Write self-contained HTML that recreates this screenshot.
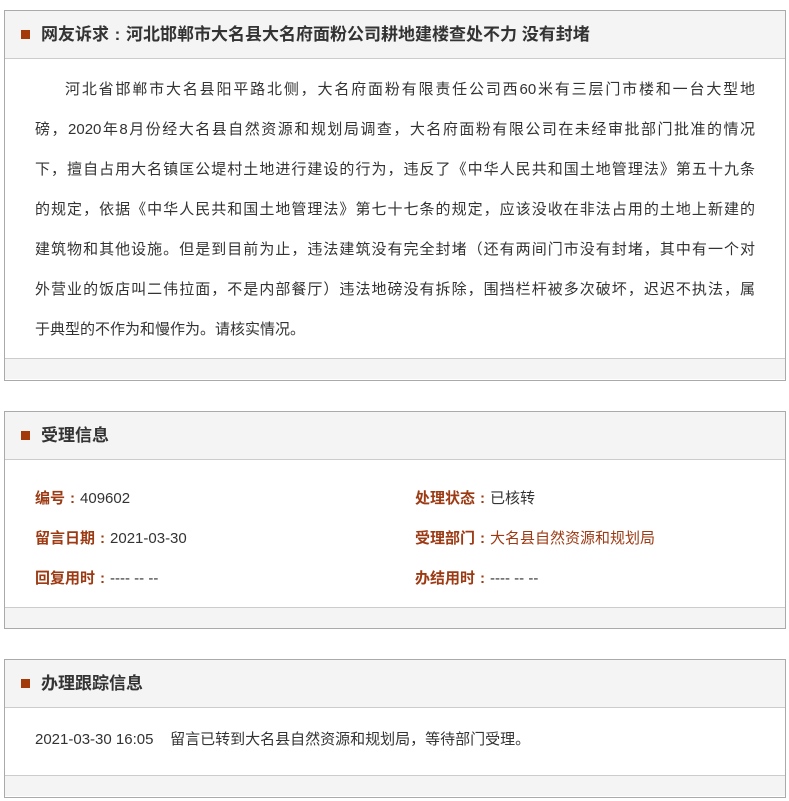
<!DOCTYPE html>
<html><head><meta charset="utf-8"><style>
*{margin:0;padding:0;box-sizing:border-box}
body{width:789px;height:801px;background:#fff;font-family:"Liberation Sans","Microsoft YaHei","Noto Sans CJK SC",sans-serif;color:#333;position:relative;overflow:hidden}
.box{position:absolute;left:4px;width:782px;border:1px solid #aaa;background:#fff}
.hd{height:48px;background:#f4f4f4;border-bottom:1px solid #ccc;position:relative;font-size:17px;font-weight:bold;color:#333;line-height:47px;padding-left:36px}
.hd:before{content:"";position:absolute;left:16px;top:19px;width:9px;height:9px;background:#a33a0a}
.ft{height:21px;background:#f4f4f4;border-top:1px solid #ccc}
.txt{padding:11px 30px 6px 30px;font-size:15px;line-height:40px;overflow:hidden}
.txt div{text-align:justify;text-align-last:justify;white-space:nowrap}
.txt div.l{text-align-last:left}
.row{position:absolute;font-size:15px}
.lb{color:#9c3a13;font-weight:bold}
.br{color:#9c3a13}
.c{display:inline-block;width:1em;text-align:center}
</style></head><body>
<div class="box" style="top:10px;height:371px">
<div class="hd">网友诉求<span class="c">:</span>河北邯郸市大名县大名府面粉公司耕地建楼查处不力 没有封堵</div>
<div class="txt" style="height:299px">
<div style="padding-left:30px">河北省邯郸市大名县阳平路北侧，大名府面粉有限责任公司西60米有三层门市楼和一台大型地</div>
<div>磅，2020年8月份经大名县自然资源和规划局调查，大名府面粉有限公司在未经审批部门批准的情况</div>
<div>下，擅自占用大名镇匡公堤村土地进行建设的行为，违反了《中华人民共和国土地管理法》第五十九条</div>
<div>的规定，依据《中华人民共和国土地管理法》第七十七条的规定，应该没收在非法占用的土地上新建的</div>
<div>建筑物和其他设施。但是到目前为止，违法建筑没有完全封堵（还有两间门市没有封堵，其中有一个对</div>
<div>外营业的饭店叫二伟拉面，不是内部餐厅）违法地磅没有拆除，围挡栏杆被多次破坏，迟迟不执法，属</div>
<div class="l">于典型的不作为和慢作为。请核实情况。</div>
</div>
<div class="ft"></div>
</div>

<div class="box" style="top:411px;height:218px">
<div class="hd">受理信息</div>
<div style="height:147px;position:relative">
<div class="row" style="left:30px;top:27px"><span class="lb">编号<span class="c">:</span></span>409602</div>
<div class="row" style="left:410px;top:27px"><span class="lb">处理状态<span class="c">:</span></span>已核转</div>
<div class="row" style="left:30px;top:67px"><span class="lb">留言日期<span class="c">:</span></span>2021-03-30</div>
<div class="row" style="left:410px;top:67px"><span class="lb">受理部门<span class="c">:</span></span><span class="br">大名县自然资源和规划局</span></div>
<div class="row" style="left:30px;top:107px"><span class="lb">回复用时<span class="c">:</span></span>---- -- --</div>
<div class="row" style="left:410px;top:107px"><span class="lb">办结用时<span class="c">:</span></span>---- -- --</div>
</div>
<div class="ft"></div>
</div>

<div class="box" style="top:659px;height:139px">
<div class="hd">办理跟踪信息</div>
<div style="height:67px;position:relative">
<div class="row" style="left:30px;top:20px">2021-03-30 16:05&nbsp;&nbsp;&nbsp;&nbsp;留言已转到大名县自然资源和规划局，等待部门受理。</div>
</div>
<div class="ft"></div>
</div>
</body></html>
